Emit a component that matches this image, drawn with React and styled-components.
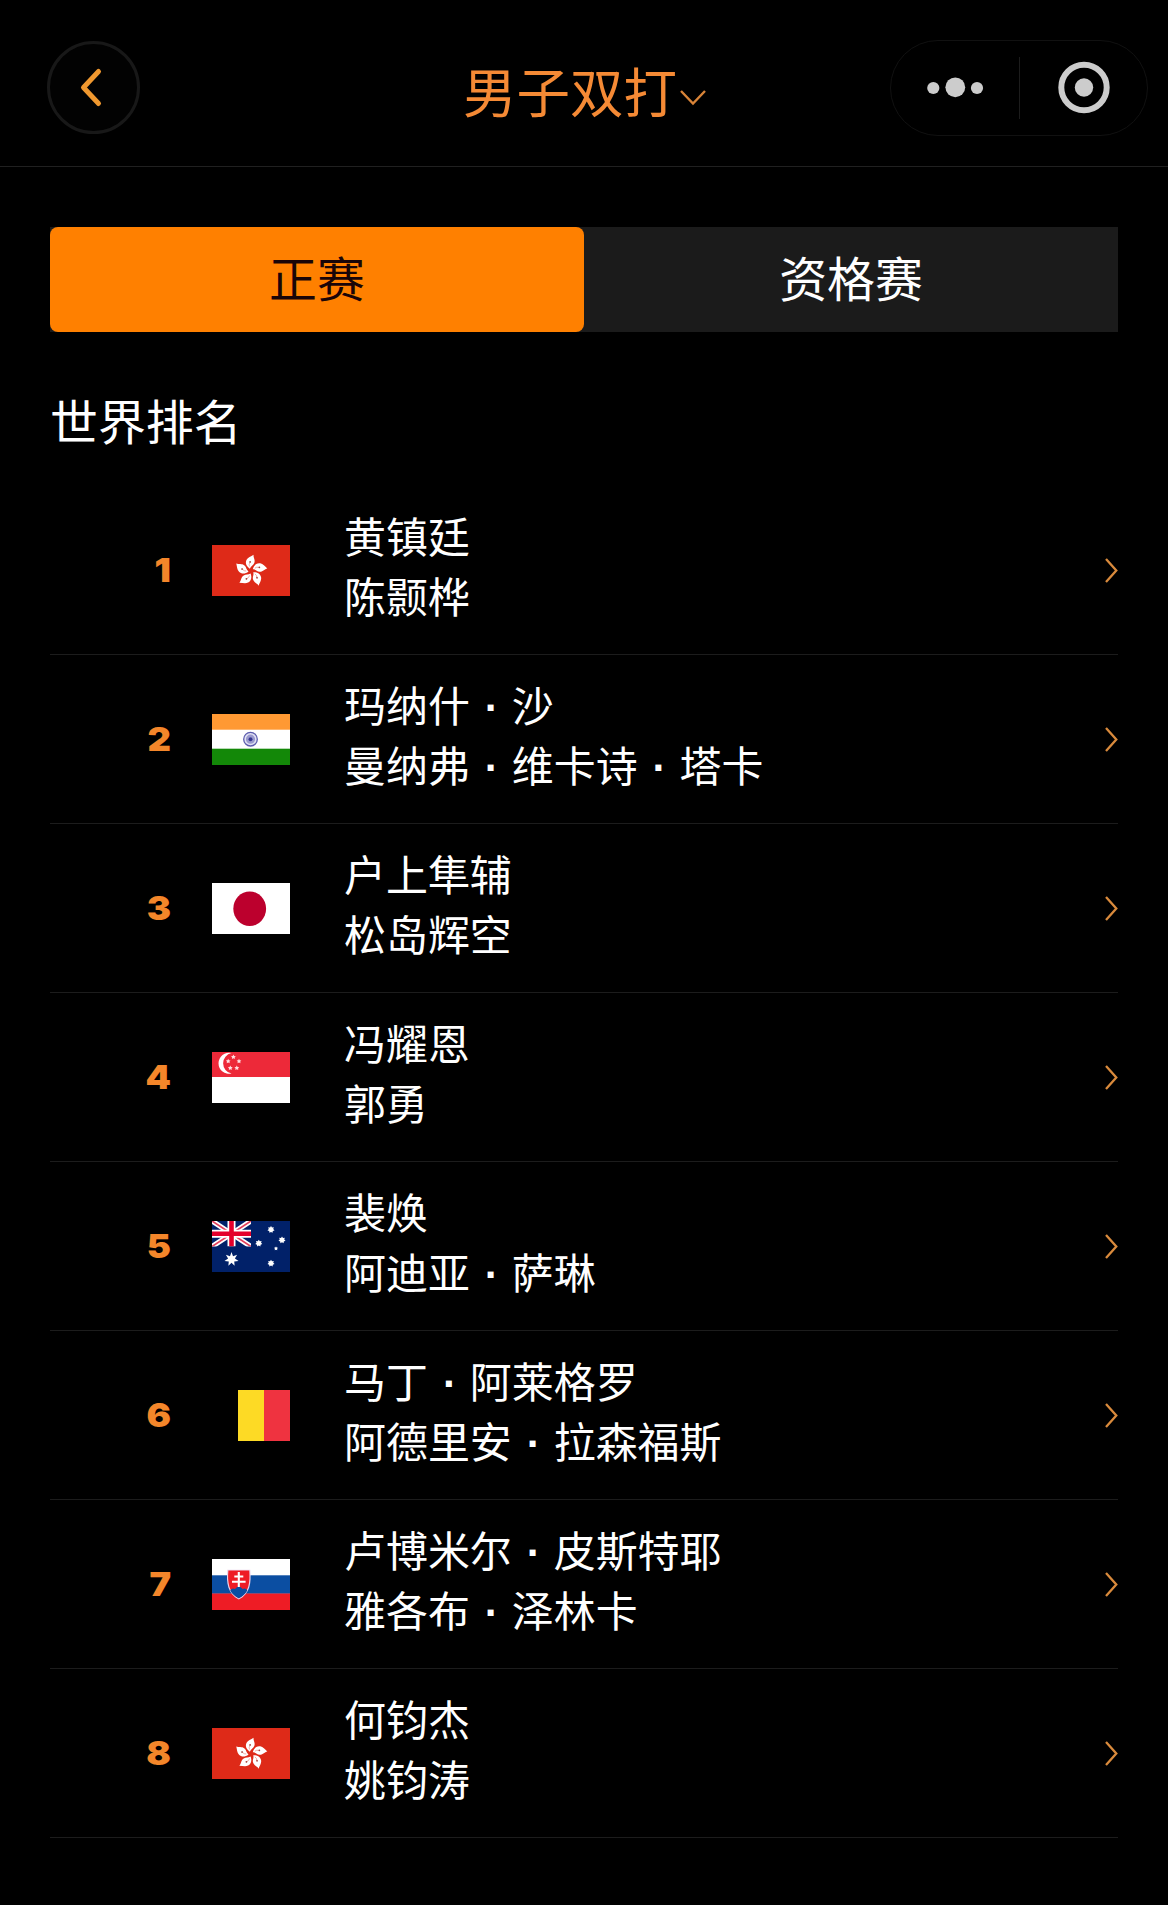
import React, { useState } from "react";
import styled, { createGlobalStyle } from "styled-components";

const GlobalStyle = createGlobalStyle`
  body {
    margin: 0;
    background: #000;
  }
`;

const Page = styled.div`
  background: #000;
  box-sizing: border-box;
  color: #fff;
  font-family: "Noto Sans CJK SC", sans-serif;
  font-weight: 400;
  min-height: 1905px;
  overflow: hidden;
  width: 1168px;
`;

const Header = styled.header`
  align-items: flex-start;
  border-bottom: 1px solid #202020;
  box-sizing: border-box;
  display: grid;
  grid-template-columns: 416px auto 1fr;
  height: 167px;
  padding: 40px 20px 0 47px;
`;

const BackButton = styled.button`
  align-items: center;
  background: #020202;
  border: 3px solid #181818;
  border-radius: 50%;
  box-sizing: border-box;
  cursor: pointer;
  display: flex;
  height: 93px;
  justify-content: center;
  margin-top: 1px;
  padding: 0 8px 0 0;
  width: 93px;
`;

const Title = styled.h1`
  align-items: center;
  color: #f58a35;
  display: flex;
  font-size: 53.5px;
  font-weight: 400;
  height: 94px;
  line-height: 94px;
  margin: 3px 0 0;
`;

const TitleArrow = styled.svg`
  display: block;
  margin: 16px 0 0 2px;
`;

const Capsule = styled.div`
  align-items: center;
  border: 1px solid #111;
  border-radius: 48px;
  box-sizing: border-box;
  display: flex;
  height: 96px;
  justify-self: end;
  width: 258px;
`;

const CapsuleItem = styled.div`
  align-items: center;
  display: flex;
  flex: 1;
  justify-content: center;
`;

const CapsuleLine = styled.div`
  background: #1c1c1c;
  height: 62px;
  width: 1px;
`;

const Main = styled.main`
  padding: 60px 50px 0;
`;

const Tabs = styled.div`
  background: #1b1b1b;
  display: flex;
  height: 105px;
`;

const Tab = styled.button`
  background: ${props => (props.$active ? "#ff8000" : "transparent")};
  border: 0;
  border-radius: ${props => (props.$active ? "8px" : "0")};
  box-sizing: border-box;
  color: ${props => (props.$active ? "#1a0508" : "#fff")};
  cursor: pointer;
  flex: 1;
  font-family: inherit;
  font-size: 47.9px;
  height: 105px;
  line-height: 98px;
  padding: 0 0 7px;
`;

const SectionTitle = styled.h2`
  font-size: 47.9px;
  font-weight: 400;
  line-height: 70px;
  margin: 52px 0 32px;
`;

const List = styled.ul`
  list-style: none;
  margin: 0;
  padding: 0;
`;

const Row = styled.li`
  align-items: center;
  border-bottom: 1px solid #1c1c1c;
  box-sizing: border-box;
  display: flex;
  height: 169px;
`;

const Rank = styled.span`
  color: #f4862a;
  font-family: Inter, "Liberation Sans", sans-serif;
  font-size: 33px;
  font-weight: 900;
  line-height: 40px;
  text-align: right;
  transform: scaleX(1.1);
  transform-origin: right center;
  width: 121px;
`;

const FlagBox = styled.svg`
  display: block;
  height: 51px;
  margin: 0 54px 0 41px;
  width: 78px;
`;

const Names = styled.div`
  flex: 1;
  font-size: 41.95px;
  line-height: 60px;
  padding-bottom: 11px;
  white-space: nowrap;
`;

const Name = styled.div`
  height: 60px;
`;

const Dot = styled.span`
  box-sizing: border-box;
  display: inline-block;
  font-family: "Liberation Sans", sans-serif;
  font-weight: 700;
  line-height: 1;
  padding-left: 2px;
  text-align: center;
  width: 1em;
`;

const Petal = ({ angle }) => (
  <g transform={`rotate(${angle})`}>
    <path d="M-1.2 -2.2 C-4.6 -4.2 -6.4 -7.6 -4.8 -11 C-3.6 -13.6 -0.6 -14.6 2 -16.4 C1.6 -13.6 4.2 -11.6 3 -8 C2.2 -5.6 -0.4 -5 -1.2 -2.2Z" fill="#fff" />
    <path d="M-1.6 -4.5 Q-2.6 -6.5 -1.4 -8.4" fill="none" stroke="#e98078" strokeWidth="0.6" />
    <circle cx="-1.2" cy="-9" r="0.9" fill="#a8483e" />
  </g>
);

const HongKong = () => (
  <>
    <rect width="78" height="51" fill="#de2a18" />
    <g transform="translate(39 26)">
      {[2, 74, 146, 218, 290].map(angle => (
        <Petal key={angle} angle={angle} />
      ))}
    </g>
  </>
);

const India = () => (
  <>
    <rect width="78" height="51" fill="#fff" />
    <rect width="78" height="15.7" fill="#ff9933" />
    <rect y="34.7" width="78" height="16.3" fill="#138808" />
    <circle cx="38.5" cy="25.2" r="6.8" fill="#e0e0f2" stroke="#5c5cae" strokeWidth="1.3" />
    <circle cx="38.5" cy="25.2" r="3.2" fill="none" stroke="#9a9ace" strokeWidth="2.8" />
    <circle cx="38.5" cy="25.2" r="2" fill="#35358f" />
  </>
);

const Japan = () => (
  <>
    <rect width="78" height="51" fill="#fff" />
    <ellipse cx="37.7" cy="25.7" rx="16.4" ry="17.3" fill="#bc002d" />
  </>
);

const starPoints = (cx, cy, outer, inner, count) =>
  Array.from({ length: count * 2 }, (_, i) => {
    const r = i % 2 ? inner : outer;
    const a = (Math.PI * i) / count - Math.PI / 2;
    return `${(cx + r * Math.cos(a)).toFixed(2)},${(cy + r * Math.sin(a)).toFixed(2)}`;
  }).join(" ");

const Singapore = () => (
  <>
    <rect width="78" height="51" fill="#fff" />
    <rect width="78" height="25" fill="#ed2939" />
    <path d="M19.5 1.1 A10.5 10.5 0 1 0 19.5 21.5 A10.4 10.4 0 0 1 19.5 1.1Z" fill="#fff" />
    {[[21.4, 5], [27, 9.2], [24.8, 16], [18.3, 16], [16.2, 9.2]].map(([x, y]) => (
      <polygon key={x} points={starPoints(x, y, 2.5, 1.3, 5)} fill="#ffdfe2" />
    ))}
  </>
);

const Australia = () => (
  <>
    <rect width="78" height="51" fill="#012169" />
    <svg width="39" height="25.5" viewBox="0 0 39 25.5">
      <path d="M0 0 L39 25.5 M39 0 L0 25.5" stroke="#fff" strokeWidth="5.2" />
      <path d="M0 0 L39 25.5 M39 0 L0 25.5" stroke="#e4405c" strokeWidth="1.7" />
      <path d="M19.5 0 V25.5 M0 12.75 H39" stroke="#fff" strokeWidth="8" />
      <path d="M19.5 0 V25.5 M0 12.75 H39" stroke="#e4002b" strokeWidth="4.6" />
    </svg>
    <polygon points={starPoints(19.5, 38.3, 7.2, 3.5, 7)} fill="#fff" />
    <polygon points={starPoints(59, 8.6, 3.6, 2.3, 7)} fill="#fff" />
    <polygon points={starPoints(46.8, 22.3, 3.6, 2.3, 7)} fill="#fff" />
    <polygon points={starPoints(70, 19, 3.6, 2.3, 7)} fill="#fff" />
    <polygon points={starPoints(59, 42.3, 3.6, 2.3, 7)} fill="#fff" />
    <polygon points={starPoints(64, 27.5, 2.1, 1.2, 5)} fill="#fff" />
  </>
);

const Belgium = () => (
  <>
    <rect width="78" height="51" fill="#000" />
    <rect x="26" width="26" height="51" fill="#fdda25" />
    <rect x="52" width="26" height="51" fill="#ef3340" />
  </>
);

const Slovakia = () => (
  <>
    <rect width="78" height="51" fill="#fff" />
    <rect y="16.3" width="78" height="18.5" fill="#0b4ea2" />
    <rect y="34.5" width="78" height="16.5" fill="#ee1c25" />
    <path d="M15.3 10.8 H38.3 C39.5 24 38 35 26.8 40.5 C15.6 35 14.1 24 15.3 10.8Z" fill="#e8d4ea" />
    <path d="M16.4 11.6 H37.2 C38.2 23 37 34 26.8 39.2 C16.6 34 15.4 23 16.4 11.6Z" fill="#ee1c25" />
    <path d="M18.2 31.5 Q20 28.5 23 30 Q26.8 25 30.6 30 Q33.8 28.5 35.3 31.5 Q32.5 36.4 26.8 39.2 Q21 36.4 18.2 31.5Z" fill="#0b4ea2" />
    <path d="M26.8 13 V28 M22.3 17.5 H31.3 M20 22.8 H33.6" stroke="#fff" strokeWidth="2.1" />
  </>
);

const flags = {
  hk: HongKong,
  in: India,
  jp: Japan,
  sg: Singapore,
  au: Australia,
  be: Belgium,
  sk: Slovakia
};

const Flag = ({ code }) => {
  const Drawing = flags[code];
  return (
    <FlagBox viewBox="0 0 78 51">
      <Drawing />
    </FlagBox>
  );
};

const pairs = [
  { rank: 1, flag: "hk", names: ["黄镇廷", "陈颢桦"] },
  { rank: 2, flag: "in", names: ["玛纳什·沙", "曼纳弗·维卡诗·塔卡"] },
  { rank: 3, flag: "jp", names: ["户上隼辅", "松岛辉空"] },
  { rank: 4, flag: "sg", names: ["冯耀恩", "郭勇"] },
  { rank: 5, flag: "au", names: ["裴焕", "阿迪亚·萨琳"] },
  { rank: 6, flag: "be", names: ["马丁·阿莱格罗", "阿德里安·拉森福斯"] },
  { rank: 7, flag: "sk", names: ["卢博米尔·皮斯特耶", "雅各布·泽林卡"] },
  { rank: 8, flag: "hk", names: ["何钧杰", "姚钧涛"] }
];

const PlayerName = ({ name }) => (
  <Name>
    {name.split("·").map((part, i) => (
      <React.Fragment key={i}>
        {i > 0 && <Dot>·</Dot>}
        {part}
      </React.Fragment>
    ))}
  </Name>
);

const App = () => {
  const [tab, setTab] = useState("main");

  return (
    <Page lang="zh-CN">
      <GlobalStyle />
      <Header>
        <BackButton type="button">
          <svg width="28" height="44" viewBox="0 0 28 44">
            <path d="M22.5 5.5 L7.5 21.5 L22.5 37.5" fill="none" stroke="#f0982f" strokeWidth="5" strokeLinecap="round" strokeLinejoin="round" />
          </svg>
        </BackButton>
        <Title>
          男子双打
          <TitleArrow width="28" height="18" viewBox="0 0 28 18">
            <path d="M2 2 L14 14.5 L26 2" fill="none" stroke="#d98438" strokeWidth="2.4" />
          </TitleArrow>
        </Title>
        <Capsule>
          <CapsuleItem>
            <svg width="58" height="24" viewBox="0 0 58 24">
              <circle cx="7.3" cy="12" r="6.1" fill="#ccc" />
              <circle cx="29.3" cy="11.3" r="9.9" fill="#ccc" />
              <circle cx="51" cy="12" r="6.1" fill="#ccc" />
            </svg>
          </CapsuleItem>
          <CapsuleLine />
          <CapsuleItem>
            <svg width="54" height="54" viewBox="0 0 54 54">
              <circle cx="28" cy="26.5" r="22.7" fill="none" stroke="#ccc" strokeWidth="6" />
              <circle cx="28" cy="26.5" r="9.2" fill="#ccc" />
            </svg>
          </CapsuleItem>
        </Capsule>
      </Header>
      <Main>
        <Tabs>
          <Tab type="button" $active={tab === "main"} onClick={() => setTab("main")}>
            正赛
          </Tab>
          <Tab type="button" $active={tab === "qualify"} onClick={() => setTab("qualify")}>
            资格赛
          </Tab>
        </Tabs>
        <SectionTitle>世界排名</SectionTitle>
        <List>
          {pairs.map(({ rank, flag, names }) => (
            <Row key={rank}>
              <Rank>{rank}</Rank>
              <Flag code={flag} />
              <Names>
                {names.map(name => (
                  <PlayerName key={name} name={name} />
                ))}
              </Names>
              <svg width="14" height="28" viewBox="0 0 14 28">
                <path d="M2 3 L12.3 14.5 L2 26" fill="none" stroke="#d98a3c" strokeWidth="2.3" />
              </svg>
            </Row>
          ))}
        </List>
      </Main>
    </Page>
  );
};

export default App;
